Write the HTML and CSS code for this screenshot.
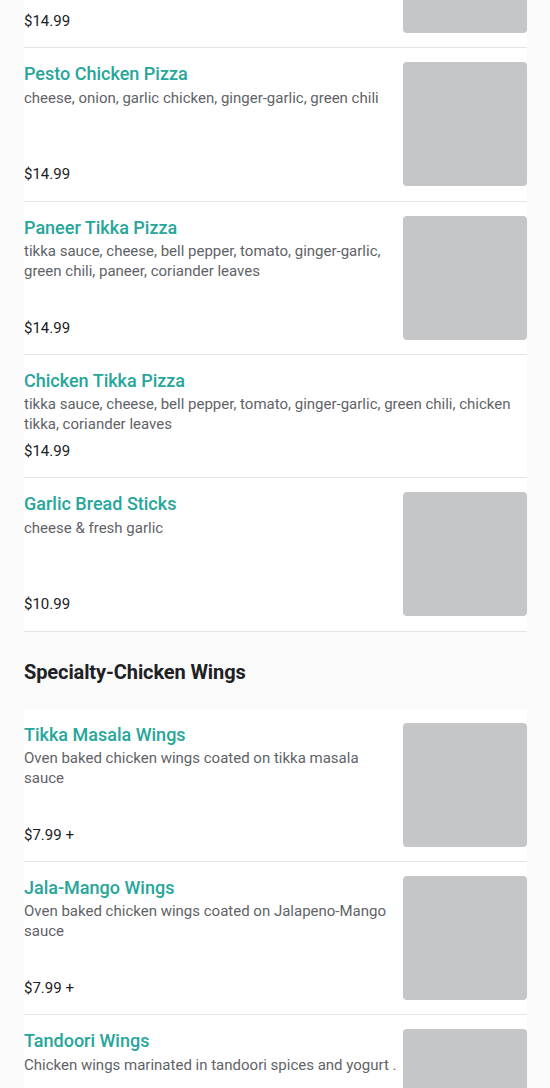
FILE: index.html
```html
<!DOCTYPE html>
<html lang="en">
<head>
    <meta charset="UTF-8">
    <meta name="viewport" content="width=device-width, initial-scale=1.0">
    <title>Menu</title>
    <link rel="stylesheet" href="styles.css">
</head>
<body>
    <div class="menu">
        <div class="section scrolled">
            <div class="item">
                <div class="info">
                    <div class="name">Chicken Pizza</div>
                    <div class="desc">cheese, onion, chicken, green chili</div>
                    <div class="price">$14.99</div>
                </div>
                <div class="thumb"></div>
            </div>
            <div class="item">
                <div class="info">
                    <div class="name">Pesto Chicken Pizza</div>
                    <div class="desc">cheese, onion, garlic chicken, ginger-garlic, green chili</div>
                    <div class="price">$14.99</div>
                </div>
                <div class="thumb"></div>
            </div>
            <div class="item">
                <div class="info">
                    <div class="name">Paneer Tikka Pizza</div>
                    <div class="desc">tikka sauce, cheese, bell pepper, tomato, ginger-garlic, green chili, paneer, coriander leaves</div>
                    <div class="price">$14.99</div>
                </div>
                <div class="thumb"></div>
            </div>
            <div class="item">
                <div class="info">
                    <div class="name">Chicken Tikka Pizza</div>
                    <div class="desc">tikka sauce, cheese, bell pepper, tomato, ginger-garlic, green chili, chicken tikka, coriander leaves</div>
                    <div class="price">$14.99</div>
                </div>
            </div>
            <div class="item">
                <div class="info">
                    <div class="name">Garlic Bread Sticks</div>
                    <div class="desc">cheese &amp; fresh garlic</div>
                    <div class="price">$10.99</div>
                </div>
                <div class="thumb"></div>
            </div>
        </div>

        <h2 class="section-title">Specialty-Chicken Wings</h2>

        <div class="section">
            <div class="item">
                <div class="info">
                    <div class="name">Tikka Masala Wings</div>
                    <div class="desc">Oven baked chicken wings coated on tikka masala sauce</div>
                    <div class="price">$7.99 +</div>
                </div>
                <div class="thumb"></div>
            </div>
            <div class="item">
                <div class="info">
                    <div class="name">Jala-Mango Wings</div>
                    <div class="desc">Oven baked chicken wings coated on Jalapeno-Mango sauce</div>
                    <div class="price">$7.99 +</div>
                </div>
                <div class="thumb"></div>
            </div>
            <div class="item">
                <div class="info">
                    <div class="name">Tandoori Wings</div>
                    <div class="desc">Chicken wings marinated in tandoori spices and yogurt .</div>
                    <div class="price">$7.99 +</div>
                </div>
                <div class="thumb"></div>
            </div>
        </div>
    </div>
</body>
</html>
```

FILE: styles.css
```css
body {
    margin: 0;
    background: #fafafa;
    font-family: Roboto, 'Liberation Sans', sans-serif;
    color: #202124;
    overflow: hidden;
}
.menu {
    padding: 0 23px 0 24px;
}
.section {
    background: #fff;
}
/* page is scrolled a little: first item is cut off at the top */
.section.scrolled {
    margin-top: -105px;
}
.item {
    display: flex;
    gap: 2px;
    padding: 14px 0 14.33px;
    border-bottom: 1px solid #e4e4e4;
}
.info {
    flex: 1;
    display: flex;
    flex-direction: column;
    min-height: 124px;
}
.item:not(:has(.thumb)) .info {
    min-height: 0;
}
.name {
    font-size: 18px;
    font-weight: 500;
    line-height: 24px;
    color: #26a69a;
}
.desc {
    margin-top: 1.5px;
    font-size: 15px;
    line-height: 20px;
    color: #5f6368;
}
.price {
    margin-top: auto;
    padding-top: 4.5px;
    font-size: 15px;
    line-height: 24px;
    color: #202124;
}
.thumb {
    width: 124px;
    height: 124px;
    flex-shrink: 0;
    background: #c5c6c8;
    border-radius: 4px;
}
.section-title {
    margin: 0;
    padding: 26px 0 23px;
    font-size: 20px;
    font-weight: 700;
    line-height: 28px;
    letter-spacing: -0.1px;
    color: #202124;
}
```
